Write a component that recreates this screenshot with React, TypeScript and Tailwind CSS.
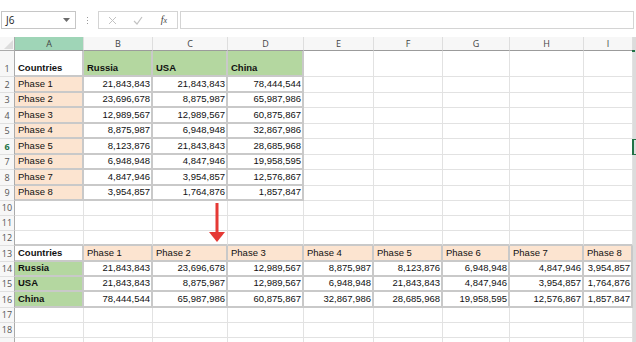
import React from "react";

const rowH = [26, 16, 15, 16, 15, 16, 15, 16, 15, 15, 15, 15, 16, 15, 15, 16, 15, 15, 15];
const letters = ["A", "B", "C", "D", "E", "F", "G", "H", "I"];

const top: (string | null)[][] = [
  ["Countries", "Russia", "USA", "China"],
  ["Phase 1", "21,843,843", "21,843,843", "78,444,544"],
  ["Phase 2", "23,696,678", "8,875,987", "65,987,986"],
  ["Phase 3", "12,989,567", "12,989,567", "60,875,867"],
  ["Phase 4", "8,875,987", "6,948,948", "32,867,986"],
  ["Phase 5", "8,123,876", "21,843,843", "28,685,968"],
  ["Phase 6", "6,948,948", "4,847,946", "19,958,595"],
  ["Phase 7", "4,847,946", "3,954,857", "12,576,867"],
  ["Phase 8", "3,954,857", "1,764,876", "1,857,847"],
];

const bottom: string[][] = [
  ["Countries", "Phase 1", "Phase 2", "Phase 3", "Phase 4", "Phase 5", "Phase 6", "Phase 7", "Phase 8"],
  ["Russia", "21,843,843", "23,696,678", "12,989,567", "8,875,987", "8,123,876", "6,948,948", "4,847,946", "3,954,857"],
  ["USA", "21,843,843", "8,875,987", "12,989,567", "6,948,948", "21,843,843", "4,847,946", "3,954,857", "1,764,876"],
  ["China", "78,444,544", "65,987,986", "60,875,867", "32,867,986", "28,685,968", "19,958,595", "12,576,867", "1,857,847"],
];

const GREEN = "bg-[#b4d7a0]";
const PEACH = "bg-[#fce4d0]";

type CellInfo = { text: string; bold?: boolean; bg?: string; right?: boolean; table?: boolean; aboveTable?: boolean };

function cellInfo(r: number, c: number): CellInfo {
  if (r >= 1 && r <= 9 && c <= 3) {
    const t = top[r - 1][c] ?? "";
    if (r === 1) {
      return { text: t, bold: true, bg: c === 0 ? "bg-white" : GREEN, table: true };
    }
    if (c === 0) return { text: t, bg: PEACH, table: true };
    return { text: t, right: true, table: true, bg: "bg-white" };
  }
  if (r >= 13 && r <= 16 && c <= 8) {
    const t = bottom[r - 13][c];
    if (r === 13) {
      return { text: t, bold: c === 0, bg: c === 0 ? "bg-white" : PEACH, table: true };
    }
    if (c === 0) return { text: t, bold: true, bg: GREEN, table: true };
    return { text: t, right: true, table: true, bg: "bg-white" };
  }
  if (r === 12 && c <= 8) return { text: "", aboveTable: true };
  return { text: "" };
}

function Toolbar() {
  return (
    <div className="h-[37px] flex items-start pt-[11px] bg-white">
      <div className="ml-[1px] w-[75px] h-[18px] border border-[#c6c6c6] flex items-center justify-between pl-[4px] pr-[5px]">
        <span className="text-[10px] text-[#222]" style={{ fontFamily: '"Open Sans", "Liberation Sans", sans-serif' }}>J6</span>
        <svg width="7" height="4" viewBox="0 0 7 4"><path d="M0 0 L7 0 L3.5 4 Z" fill="#6b6b6b" /></svg>
      </div>
      <div className="w-[22px] h-[18px] flex flex-col items-center justify-center gap-[2px]">
        <div className="w-[1px] h-[1px] bg-[#9a9a9a]" />
        <div className="w-[1px] h-[1px] bg-[#9a9a9a]" />
        <div className="w-[1px] h-[1px] bg-[#9a9a9a]" />
      </div>
      <div className="w-[80px] h-[18px] border border-[#d4d4d4] flex items-center">
        <div className="w-[26px] flex justify-center">
          <svg width="9" height="9" viewBox="0 0 9 9"><path d="M1 1 L8 8 M8 1 L1 8" stroke="#c2c2c2" strokeWidth="1" /></svg>
        </div>
        <div className="w-[26px] flex justify-center">
          <svg width="10" height="9" viewBox="0 0 10 9"><path d="M1 5 L4 8 L9 1" stroke="#c2c2c2" strokeWidth="1.2" fill="none" /></svg>
        </div>
        <div className="w-[26px] flex justify-center">
          <span className="text-[10px] italic text-[#444] leading-none" style={{ fontFamily: '"Liberation Serif", serif' }}>f<span className="text-[8px]">x</span></span>
        </div>
      </div>
      <div className="ml-[2px] w-[454px] h-[18px] border border-[#d4d4d4]" />
    </div>
  );
}

export default function App() {
  const cells: React.ReactNode[] = [];
  const dataFont = { fontFamily: '"Liberation Sans", Arial, sans-serif' };
  const hdrFont = { fontFamily: '"Open Sans", "Liberation Sans", sans-serif' };

  cells.push(
    <div key="corner" className="bg-[#f7f7f7] border-r border-b border-[#ababab] relative">
      <svg className="absolute right-[1px] bottom-[1px]" width="9" height="9" viewBox="0 0 9 9"><path d="M9 0 L9 9 L0 9 Z" fill="#dcdcdc" /></svg>
    </div>
  );
  letters.forEach((l, i) => {
    cells.push(
      <div
        key={"h" + l}
        className={`${i === 0 ? "bg-[#9fd5b7]" : "bg-[#f7f7f7]"} border-r border-[#dedede] border-b border-b-[#9b9b9b] flex items-center justify-center text-[9px] text-[#444]`}
        style={hdrFont}
      >
        {l}
      </div>
    );
  });
  cells.push(<div key="sb0" className="bg-[#dcdcdc]" />);

  for (let r = 1; r <= 19; r++) {
    cells.push(
      <div
        key={"rh" + r}
        className={`bg-[#f7f7f7] border-r border-[#ababab] border-b border-b-[#e0e0e0] flex items-end justify-center pb-[1px] text-[9px] ${r === 6 ? "text-[#217346] font-bold" : "text-[#555]"}`}
        style={hdrFont}
      >
        {r <= 18 ? r : ""}
      </div>
    );
    for (let c = 0; c < 9; c++) {
      const info = cellInfo(r, c);
      let border = "border-r border-b border-[#e2e2e2]";
      if (info.table) border = "border-r-2 border-b-2 border-[#c9c9c9]";
      else if (info.aboveTable) border = "border-r border-r-[#e2e2e2] border-b-2 border-b-[#c9c9c9]";
      cells.push(
        <div
          key={`c${r}-${c}`}
          className={`${info.bg ?? "bg-white"} ${border} flex items-end overflow-hidden whitespace-nowrap pb-[1px] text-[9.5px] leading-[12px] text-[#111] ${info.right ? "justify-end pr-[1px]" : "justify-start pl-[3px]"} ${info.bold ? "font-bold" : ""}`}
          style={dataFont}
        >
          {info.text}
        </div>
      );
    }
    cells.push(<div key={"sb" + r} className="bg-[#dcdcdc]" />);
  }

  return (
    <div className="w-[636px] h-[342px] overflow-hidden bg-white relative">
      <Toolbar />
      <div
        className="grid grid-cols-[15px_69px_69px_75px_76px_70px_69px_67px_74px_49px_3px]"
        style={{ gridTemplateRows: [14, ...rowH].map((h) => h + "px").join(" ") }}
      >
        {cells}
      </div>
      <svg className="absolute left-[209px] top-[203px]" width="16" height="40" viewBox="0 0 16 40">
        <rect x="6.5" y="0" width="3" height="30" fill="#e53935" />
        <path d="M0 29 L16 29 L8 39 Z" fill="#e53935" />
      </svg>
      <div className="absolute left-[632px] top-[139px] w-[4px] h-[16px] border-l-2 border-t border-b border-[#217346]" />
      <div className="absolute left-[632px] top-[50px] w-[3px] h-[2px] bg-[#217346]" />
    </div>
  );
}
